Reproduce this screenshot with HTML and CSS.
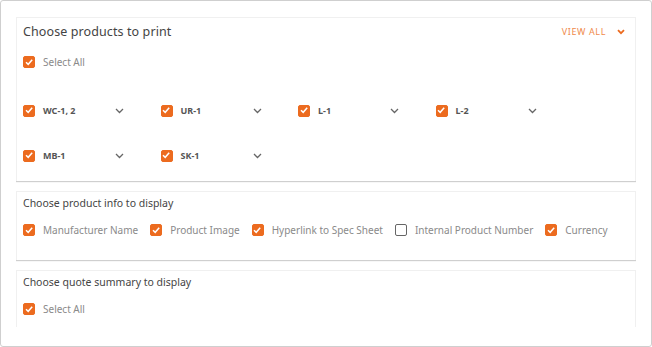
FILE: index.html
```html
<!DOCTYPE html>
<html lang="en">
<head>
    <meta charset="UTF-8">
    <meta name="viewport" content="width=device-width, initial-scale=1.0">
    <title>Print Settings</title>
    <link rel="stylesheet" href="styles.css">
</head>
<body>
    <div class="frame">
        <div class="scroller">

            <div class="card products">
                <div class="card-head">
                    <h2>Choose products to print</h2>
                    <a class="view-all" href="#">VIEW ALL
                        <svg width="8" height="6" viewBox="0 0 8 6"><path d="M1 1.2 L4 4.2 L7 1.2" fill="none" stroke="#ec6b1f" stroke-width="1.8"/></svg>
                    </a>
                </div>
                <label class="check-row select-all">
                    <span class="box on"><svg viewBox="0 0 12 12"><path d="M3 6.2 L5.2 8.3 L9.2 3.8" fill="none" stroke="#fff" stroke-width="1.5"/></svg></span>
                    <span class="check-label">Select All</span>
                </label>

                <div class="product-grid">
                    <div class="product">
                        <span class="box on"><svg viewBox="0 0 12 12"><path d="M3 6.2 L5.2 8.3 L9.2 3.8" fill="none" stroke="#fff" stroke-width="1.5"/></svg></span>
                        <span class="product-name">WC-1, 2</span>
                        <svg class="chev" width="9" height="6" viewBox="0 0 9 6"><path d="M1 1 L4.5 4.5 L8 1" fill="none" stroke="#666" stroke-width="1.3"/></svg>
                    </div>
                    <div class="product">
                        <span class="box on"><svg viewBox="0 0 12 12"><path d="M3 6.2 L5.2 8.3 L9.2 3.8" fill="none" stroke="#fff" stroke-width="1.5"/></svg></span>
                        <span class="product-name">UR-1</span>
                        <svg class="chev" width="9" height="6" viewBox="0 0 9 6"><path d="M1 1 L4.5 4.5 L8 1" fill="none" stroke="#666" stroke-width="1.3"/></svg>
                    </div>
                    <div class="product">
                        <span class="box on"><svg viewBox="0 0 12 12"><path d="M3 6.2 L5.2 8.3 L9.2 3.8" fill="none" stroke="#fff" stroke-width="1.5"/></svg></span>
                        <span class="product-name">L-1</span>
                        <svg class="chev" width="9" height="6" viewBox="0 0 9 6"><path d="M1 1 L4.5 4.5 L8 1" fill="none" stroke="#666" stroke-width="1.3"/></svg>
                    </div>
                    <div class="product">
                        <span class="box on"><svg viewBox="0 0 12 12"><path d="M3 6.2 L5.2 8.3 L9.2 3.8" fill="none" stroke="#fff" stroke-width="1.5"/></svg></span>
                        <span class="product-name">L-2</span>
                        <svg class="chev" width="9" height="6" viewBox="0 0 9 6"><path d="M1 1 L4.5 4.5 L8 1" fill="none" stroke="#666" stroke-width="1.3"/></svg>
                    </div>
                    <div class="product">
                        <span class="box on"><svg viewBox="0 0 12 12"><path d="M3 6.2 L5.2 8.3 L9.2 3.8" fill="none" stroke="#fff" stroke-width="1.5"/></svg></span>
                        <span class="product-name">MB-1</span>
                        <svg class="chev" width="9" height="6" viewBox="0 0 9 6"><path d="M1 1 L4.5 4.5 L8 1" fill="none" stroke="#666" stroke-width="1.3"/></svg>
                    </div>
                    <div class="product">
                        <span class="box on"><svg viewBox="0 0 12 12"><path d="M3 6.2 L5.2 8.3 L9.2 3.8" fill="none" stroke="#fff" stroke-width="1.5"/></svg></span>
                        <span class="product-name">SK-1</span>
                        <svg class="chev" width="9" height="6" viewBox="0 0 9 6"><path d="M1 1 L4.5 4.5 L8 1" fill="none" stroke="#666" stroke-width="1.3"/></svg>
                    </div>
                </div>
            </div>

            <div class="card info">
                <h3>Choose product info to display</h3>
                <div class="option-row">
                    <label class="check-row">
                        <span class="box on"><svg viewBox="0 0 12 12"><path d="M3 6.2 L5.2 8.3 L9.2 3.8" fill="none" stroke="#fff" stroke-width="1.5"/></svg></span>
                        <span class="check-label">Manufacturer Name</span>
                    </label>
                    <label class="check-row">
                        <span class="box on"><svg viewBox="0 0 12 12"><path d="M3 6.2 L5.2 8.3 L9.2 3.8" fill="none" stroke="#fff" stroke-width="1.5"/></svg></span>
                        <span class="check-label">Product Image</span>
                    </label>
                    <label class="check-row">
                        <span class="box on"><svg viewBox="0 0 12 12"><path d="M3 6.2 L5.2 8.3 L9.2 3.8" fill="none" stroke="#fff" stroke-width="1.5"/></svg></span>
                        <span class="check-label">Hyperlink to Spec Sheet</span>
                    </label>
                    <label class="check-row">
                        <span class="box"></span>
                        <span class="check-label">Internal Product Number</span>
                    </label>
                    <label class="check-row">
                        <span class="box on"><svg viewBox="0 0 12 12"><path d="M3 6.2 L5.2 8.3 L9.2 3.8" fill="none" stroke="#fff" stroke-width="1.5"/></svg></span>
                        <span class="check-label">Currency</span>
                    </label>
                </div>
            </div>

            <div class="card summary">
                <h3>Choose quote summary to display</h3>
                <div class="option-row">
                    <label class="check-row">
                        <span class="box on"><svg viewBox="0 0 12 12"><path d="M3 6.2 L5.2 8.3 L9.2 3.8" fill="none" stroke="#fff" stroke-width="1.5"/></svg></span>
                        <span class="check-label">Select All</span>
                    </label>
                </div>
            </div>

        </div>
    </div>
</body>
</html>
```

FILE: styles.css
```css
body {
    margin: 0;
    font-family: "Noto Sans", "Open Sans", sans-serif;
    background-color: #fff;
    color: #444;
}
.frame {
    width: 652px;
    height: 347px;
    box-sizing: border-box;
    border: 1px solid #cfcfcf;
    border-radius: 3px;
    padding: 16px 15px 0 15px;
}
.scroller {
    height: 310px;
    overflow: hidden;
}
.card {
    background-color: #fff;
    border: 1px solid #f0f0f0;
    border-bottom: none;
    box-shadow: 0 1px 1px #cfcfcf;
    padding: 0 6px;
    margin-bottom: 10px;
}
.card-head {
    height: 27px;
    display: flex;
    align-items: center;
    justify-content: space-between;
}
h2 {
    margin: 0;
    font-size: 12.5px;
    font-weight: 400;
    color: #444;
    letter-spacing: 0.1px;
}
h3 {
    margin: 0;
    height: 22px;
    line-height: 22px;
    font-size: 10.5px;
    font-weight: 400;
    color: #444;
}
.view-all {
    color: #f08a4b;
    font-size: 9px;
    letter-spacing: 0.6px;
    text-decoration: none;
    display: flex;
    align-items: center;
    gap: 11px;
    margin-right: 4px;
}
.check-row {
    display: flex;
    align-items: center;
    gap: 8px;
    white-space: nowrap;
}
.select-all {
    height: 34px;
}
.box {
    width: 12px;
    height: 12px;
    box-sizing: border-box;
    border-radius: 2px;
    border: 1.5px solid #666;
    flex: none;
}
.box.on {
    background-color: #ec6b1f;
    border-color: #ec6b1f;
}
.box svg {
    display: block;
    width: 12px;
    height: 12px;
    margin: -1.5px;
}
.check-label {
    font-size: 10px;
    color: #8a8a8a;
}
.product-grid {
    margin-top: 9px;
    padding-bottom: 3px;
    display: grid;
    grid-template-columns: repeat(4, 137.5px);
    grid-auto-rows: 45px;
}
.product {
    display: flex;
    align-items: center;
    width: 101px;
}
.product-name {
    margin-left: 8px;
    font-size: 9px;
    font-weight: 700;
    color: #555;
    flex: 1;
}
.chev {
    flex: none;
}
.info {
    height: 69px;
    box-sizing: border-box;
}
.option-row {
    height: 32px;
    display: flex;
    align-items: center;
    gap: 12px;
}
.summary {
    height: 80px;
}
```
